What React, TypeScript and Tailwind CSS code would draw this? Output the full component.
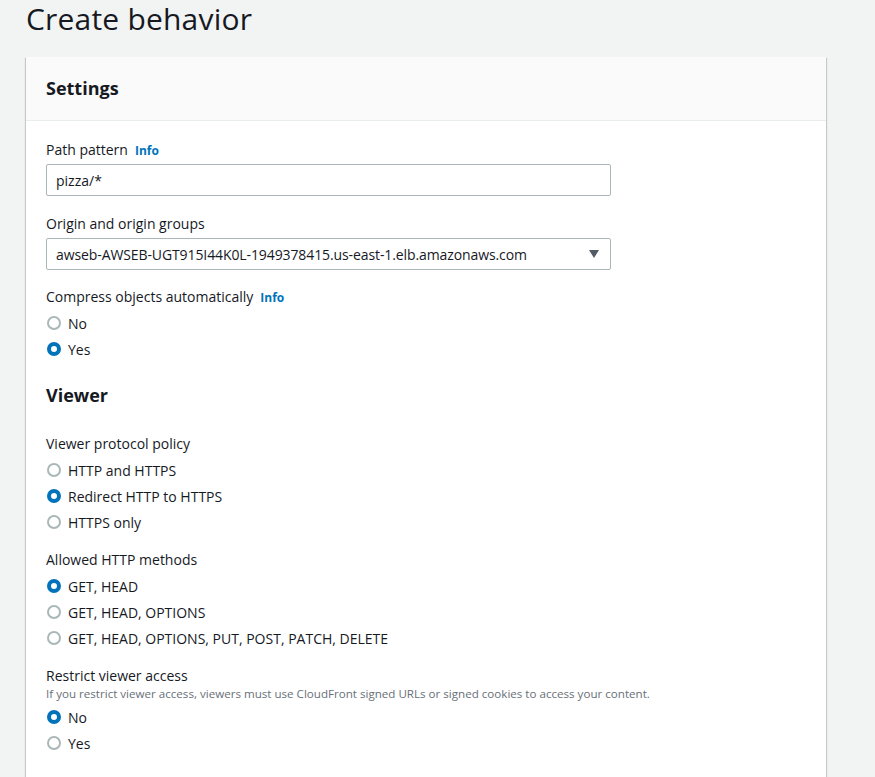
const Radio = ({ label, checked }: { label: string; checked?: boolean }) => {
  return (
    <label className="flex items-center gap-[7px] h-[20px] cursor-pointer">
      <span
        className={
          checked
            ? "w-[14px] h-[14px] rounded-full border-[4px] border-[#0073bb] bg-white ml-[1px]"
            : "w-[14px] h-[14px] rounded-full border-[2px] border-[#aab7b8] bg-white ml-[1px]"
        }
      />
      <span className="text-[14px] text-[#16191f]">{label}</span>
    </label>
  );
};

const Info = () => (
  <span className="ml-[7px] text-[12px] font-bold text-[#0073bb] cursor-pointer">Info</span>
);

const Label = ({ children }: { children: React.ReactNode }) => (
  <div className="flex items-baseline h-[20px] leading-[20px] text-[14px] text-[#16191f]">{children}</div>
);

const RadioGroup = ({ options, value }: { options: string[]; value: string }) => (
  <div className="flex flex-col gap-[6px] mt-[6px]">
    {options.map((o) => (
      <Radio key={o} label={o} checked={o === value} />
    ))}
  </div>
);

export default function App() {
  return (
    <div className="min-h-screen bg-[#f2f3f3] pl-[26px] font-['Open_Sans',sans-serif] text-[#16191f]">
      <h1 className="text-[30px] leading-[38px] font-normal tracking-[0.2px]">Create behavior</h1>
      <div className="mt-[19px] w-[800px] bg-white shadow-[0_1px_1px_0_rgba(0,28,36,0.3),1px_1px_1px_0_rgba(0,28,36,0.15),-1px_1px_1px_0_rgba(0,28,36,0.15)]">
        <div className="h-[64px] flex items-center px-[20px] pb-[2px] bg-[#fafafa] border-b border-[#eaeded]">
          <h2 className="text-[18px] leading-[22px] font-bold">Settings</h2>
        </div>
        <div className="px-[20px] pt-[19px] pb-[40px] flex flex-col">
          <div>
            <Label>
              Path pattern <Info />
            </Label>
            <div className="mt-[4px] w-[565px] h-[32px] border border-[#aab7b8] rounded-[2px] flex items-center px-[9px] text-[14px]">
              pizza/*
            </div>
          </div>
          <div className="mt-[18px]">
            <Label>Origin and origin groups</Label>
            <div className="mt-[4px] w-[565px] h-[32px] border border-[#aab7b8] rounded-[2px] flex items-center justify-between pl-[9px] pr-[11px] text-[14px]">
              <span className="tracking-[-0.1px]">awseb-AWSEB-UGT915I44K0L-1949378415.us-east-1.elb.amazonaws.com</span>
              <svg width="10" height="8" viewBox="0 0 10 8">
                <path d="M0 0h10L5 8z" fill="#545b64" />
              </svg>
            </div>
          </div>
          <div className="mt-[17px]">
            <Label>
              Compress objects automatically <Info />
            </Label>
            <RadioGroup options={["No", "Yes"]} value="Yes" />
          </div>

          <h2 className="mt-[24px] text-[18px] leading-[24px] font-bold">Viewer</h2>

          <div className="mt-[27px] flex flex-col gap-[18px]">
            <div>
              <Label>Viewer protocol policy</Label>
              <RadioGroup
                options={["HTTP and HTTPS", "Redirect HTTP to HTTPS", "HTTPS only"]}
                value="Redirect HTTP to HTTPS"
              />
            </div>
            <div>
              <Label>Allowed HTTP methods</Label>
              <RadioGroup
                options={["GET, HEAD", "GET, HEAD, OPTIONS", "GET, HEAD, OPTIONS, PUT, POST, PATCH, DELETE"]}
                value="GET, HEAD"
              />
            </div>
            <div>
              <Label>Restrict viewer access</Label>
              <div className="text-[11.6px] leading-[15px] text-[#687078]">
                If you restrict viewer access, viewers must use CloudFront signed URLs or signed cookies to access your content.
              </div>
              <RadioGroup options={["No", "Yes"]} value="No" />
            </div>
          </div>
        </div>
      </div>
    </div>
  );
}
